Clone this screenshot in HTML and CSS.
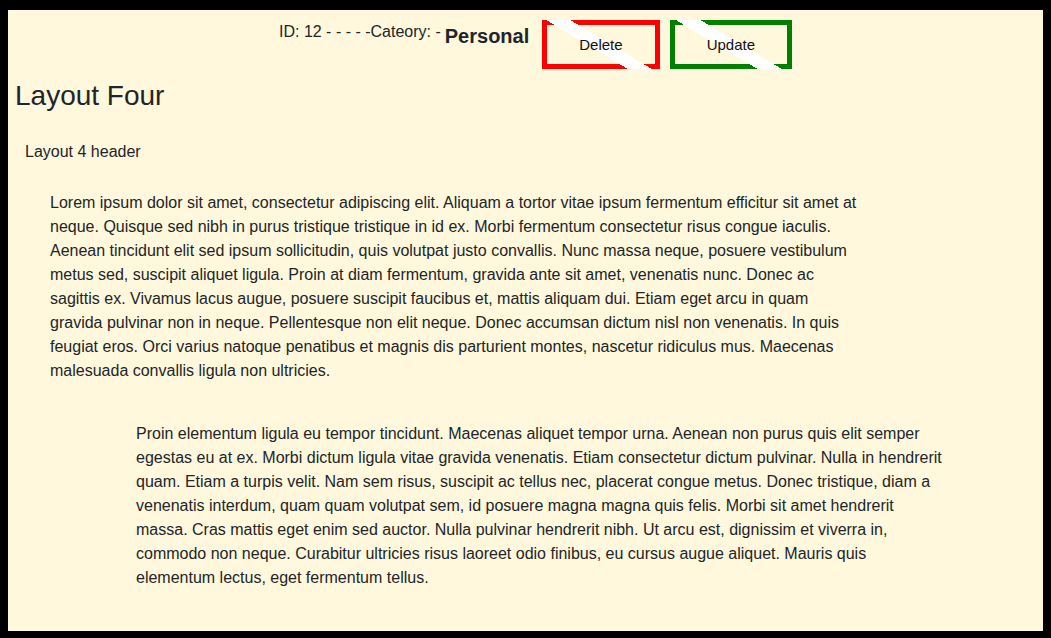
FILE: index.html
```html
<!DOCTYPE html>
<html lang="en">
<head>
<meta charset="utf-8">
<title>Layout Four</title>
<link rel="stylesheet" href="styles.css">
</head>
<body>
<div class="topbar">
  <span class="meta">ID: 12 - - - - -Cateory: -</span>
  <strong class="category">Personal</strong>
  <button class="btn btn-delete">Delete</button>
  <button class="btn btn-update">Update</button>
</div>
<h3 class="title">Layout Four</h3>
<div class="section-header">Layout 4 header</div>
<p class="para para-one">Lorem ipsum dolor sit amet, consectetur adipiscing elit. Aliquam a tortor vitae ipsum fermentum efficitur sit amet at neque. Quisque sed nibh in purus tristique tristique in id ex. Morbi fermentum consectetur risus congue iaculis. Aenean tincidunt elit sed ipsum sollicitudin, quis volutpat justo convallis. Nunc massa neque, posuere vestibulum metus sed, suscipit aliquet ligula. Proin at diam fermentum, gravida ante sit amet, venenatis nunc. Donec ac sagittis ex. Vivamus lacus augue, posuere suscipit faucibus et, mattis aliquam dui. Etiam eget arcu in quam gravida pulvinar non in neque. Pellentesque non elit neque. Donec accumsan dictum nisl non venenatis. In quis feugiat eros. Orci varius natoque penatibus et magnis dis parturient montes, nascetur ridiculus mus. Maecenas malesuada convallis ligula non ultricies.</p>
<p class="para para-two">Proin elementum ligula eu tempor tincidunt. Maecenas aliquet tempor urna. Aenean non purus quis elit semper egestas eu at ex. Morbi dictum ligula vitae gravida venenatis. Etiam consectetur dictum pulvinar. Nulla in hendrerit quam. Etiam a turpis velit. Nam sem risus, suscipit ac tellus nec, placerat congue metus. Donec tristique, diam a venenatis interdum, quam quam volutpat sem, id posuere magna magna quis felis. Morbi sit amet hendrerit massa. Cras mattis eget enim sed auctor. Nulla pulvinar hendrerit nibh. Ut arcu est, dignissim et viverra in, commodo non neque. Curabitur ultricies risus laoreet odio finibus, eu cursus augue aliquet. Mauris quis elementum lectus, eget fermentum tellus.</p>
</body>
</html>
```

FILE: styles.css
```css
html {
  background: #000;
  height: 100%;
}

body {
  margin: 10px 8px 7px 8px;
  min-height: calc(100vh - 17px);
  box-sizing: border-box;
  background: #fff8dc;
  color: #212529;
  font-family: "Liberation Sans", Arial, sans-serif;
  font-size: 16px;
  line-height: 1.5;
  overflow: hidden;
}

.topbar {
  display: flex;
  justify-content: center;
  align-items: flex-start;
  padding-top: 10px;
  padding-left: 20px;
}

.meta {
  font-size: 16px;
  line-height: 1.5;
}

.category {
  font-size: 20px;
  font-weight: 700;
  line-height: 23px;
  margin-top: 5px;
  margin-left: 4px;
}

.btn {
  margin: 0 0 0 10px;
  padding: 0 32px;
  height: 49px;
  font-family: "Liberation Sans", Arial, sans-serif;
  font-size: 15px;
  line-height: 39px;
  color: #111;
  border: 5px solid transparent;
  cursor: pointer;
}

.btn-delete {
  margin-left: 13px;
  background:
    linear-gradient(31deg, transparent 43%, #fff 43%, #fff 55%, transparent 55%) border-box,
    linear-gradient(#fff8dc, #fff8dc) padding-box,
    linear-gradient(#ff0000, #ff0000) border-box;
}

.btn-update {
  background:
    linear-gradient(31deg, transparent 43%, #fff 43%, #fff 55%, transparent 55%) border-box,
    linear-gradient(#fff8dc, #fff8dc) padding-box,
    linear-gradient(#008000, #008000) border-box;
}

.title {
  margin: 10px 0 0 7px;
  font-size: 28px;
  font-weight: 400;
  line-height: 1.2;
}

.section-header {
  margin: 27px 0 0 17px;
  line-height: 24px;
}

.para {
  margin: 0;
  width: 810px;
  line-height: 24px;
}

.para-one {
  margin: 27px 0 0 42px;
}

.para-two {
  margin: 39px 0 0 128px;
}
```
